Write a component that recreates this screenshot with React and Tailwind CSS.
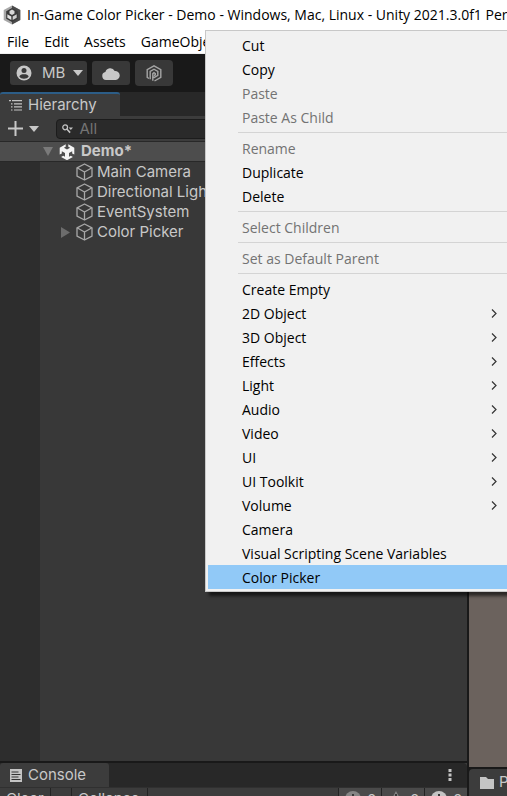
import React from "react";

const menuGroups = [
  [{ label: "Cut" }, { label: "Copy" }, { label: "Paste", off: true }, { label: "Paste As Child", off: true }],
  [{ label: "Rename", off: true }, { label: "Duplicate" }, { label: "Delete" }],
  [{ label: "Select Children", off: true }],
  [{ label: "Set as Default Parent", off: true }],
  [
    { label: "Create Empty" },
    { label: "2D Object", sub: true },
    { label: "3D Object", sub: true },
    { label: "Effects", sub: true },
    { label: "Light", sub: true },
    { label: "Audio", sub: true },
    { label: "Video", sub: true },
    { label: "UI", sub: true },
    { label: "UI Toolkit", sub: true },
    { label: "Volume", sub: true },
    { label: "Camera" },
    { label: "Visual Scripting Scene Variables" },
    { label: "Color Picker", active: true },
  ],
];

const objects = [
  { name: "Main Camera" },
  { name: "Directional Light" },
  { name: "EventSystem" },
  { name: "Color Picker", expandable: true },
];

function AppIcon() {
  return (
    <svg className="h-5 w-[18px] shrink-0" viewBox="0 0 18 20" aria-hidden="true">
      <path d="M9 .5 17.300 5v10L9 19.500.7 15V5z" fill="#a8a8a8" />
      <path d="M9 .5 17.300 5v10L9 19.500V16l5-3V7L9 4z" fill="#4a4a4a" />
      <path d="M9 3 14.800 6.300v7.400L9 17l-5.800-3.300V6.300z" fill="#3a3a3a" />
      <path d="M9 4.500 11.500 6v2.600L9 10 6.500 8.600V6z" fill="#d8d8d8" />
      <path d="M4.300 9.200 8.300 11.500V15L4.300 12.800z" fill="#e0e0e0" />
      <path d="M13.700 9.200 9.700 11.500V15l4-2.200z" fill="#cfcfcf" />
    </svg>
  );
}

function Caret({ className }) {
  return (
    <svg className={className} viewBox="0 0 10 6" preserveAspectRatio="none" aria-hidden="true">
      <path d="M0 0h10L5 6z" fill="currentColor" />
    </svg>
  );
}

function UserIcon() {
  return (
    <svg className="size-4" viewBox="0 0 16 16" aria-hidden="true">
      <circle cx="8" cy="8" r="7.500" fill="#c8c8c8" />
      <circle cx="8" cy="5.400" r="2.500" fill="#383838" />
      <path d="M3.300 11.600C3.800 9.900 5.700 9.300 8 9.300s4.200.6 4.700 2.300C11.700 13 10 13.800 8 13.800s-3.700-.8-4.700-2.200z" fill="#383838" />
    </svg>
  );
}

function CloudIcon() {
  return (
    <svg className="h-[13px] w-[18px]" viewBox="0 0 18 13" aria-hidden="true">
      <path d="M4 13a4 4 0 0 1-.6-7.900A5 5 0 0 1 12.700 4 4.500 4.500 0 0 1 13.700 13z" fill="#c8c8c8" />
    </svg>
  );
}

function PlasticIcon() {
  return (
    <svg className="h-[17px] w-4" viewBox="0 0 16 17" fill="none" stroke="#a5a5a5" strokeWidth="1.400" aria-hidden="true">
      <path d="M3 13.500 1.200 12.400V4.600L8 .9l6.800 3.700v7.800L8.500 16" />
      <path d="M4.200 14.200V6.400L8 4.200l3.800 2.200v4L8 12.600l-1.200-.7" />
      <path d="M6.800 15.800V8.600L8 7.600l1.300.9v1.400L8 10.600" />
    </svg>
  );
}

function TreeIcon() {
  return (
    <svg className="h-[11px] w-[13px]" viewBox="0 0 13 11" fill="#c4c4c4" aria-hidden="true">
      <path d="M0 0h2v1.200H0zM3 0h10v1.200H3zM2 3.200h1.500v1.200H2zM5 3.200h8v1.200H5zM2 6.300h1.500v1.200H2zM5 6.300h8v1.200H5zM2 9.400h1.500v1.200H2zM5 9.400h8v1.200H5z" />
    </svg>
  );
}

function SearchIcon() {
  return (
    <svg className="h-[10px] w-3" viewBox="0 0 12 10" fill="none" stroke="#c4c4c4" aria-hidden="true">
      <circle cx="3.300" cy="3.300" r="2.500" strokeWidth="1.300" />
      <path d="m5 5 3.500 3.800" strokeWidth="1.600" />
      <path d="M7 3.500h4.500L9.200 6z" fill="#c4c4c4" stroke="none" />
    </svg>
  );
}

function UnityIcon() {
  return (
    <svg className="size-4" viewBox="0 0 16 16" aria-hidden="true">
      <path d="M6.700.3v2.400L4.900 3.800 8 5.600l3.100-1.800-1.800-1.100V.3L15.300 3.800v6.800l-2.100-1.200V7.200L10 9v3.700l1.800-1 2.100 1.200L8 16.200l-5.900-3.300 2.100-1.200 1.800 1V9L2.800 7.200v2.200L.7 10.600V3.800z" fill="#f4f4f4" />
    </svg>
  );
}

function CubeIcon() {
  return (
    <svg className="h-[18px] w-[17px] shrink-0" viewBox="0 0 17 18" fill="none" stroke="#a8a8a8" strokeWidth="1.300" strokeLinejoin="round" aria-hidden="true">
      <path d="M8.500 1 16 4.800v8.400L8.500 17 1 13.200V4.800z" />
      <path d="M1 4.800 8.500 9 16 4.800M8.500 9v8" />
    </svg>
  );
}

function ContextMenu() {
  return (
    <div
      role="menu"
      className="absolute top-[30px] right-0 left-[205px] border border-r-0 border-[#c8c8c8] bg-[#f1f1f1] py-[2px] pl-[2px] text-[14px] text-black shadow-[4px_4px_3px_rgba(0,0,0,0.6)]"
    >
      {menuGroups.map((group, i) => (
        <div key={i}>
          {i > 0 && <hr className="my-[3px] ml-[30px] border-[#d4d4d4]" />}
          {group.map((item) => (
            <button
              key={item.label}
              role="menuitem"
              disabled={item.off}
              className={`flex h-6 w-full items-center justify-between pr-[10px] pl-[34px] text-left leading-6 whitespace-nowrap ${
                item.active ? "bg-[#91c9f7]" : ""
              } ${item.off ? "text-[#737373]" : ""}`}
            >
              <span className="pt-[2px]">{item.label}</span>
              {item.sub && (
                <svg className="h-[9px] w-[6px]" viewBox="0 0 6 9" fill="none" stroke="#333" strokeWidth="1.200" aria-hidden="true">
                  <path d="m1 .5 4 4-4 4" />
                </svg>
              )}
            </button>
          ))}
        </div>
      ))}
    </div>
  );
}

function Hierarchy() {
  return (
    <section className="flex min-h-0 flex-1 flex-col bg-[#383838]">
      <div className="flex h-6 shrink-0 bg-[#282828]">
        <h2 className="flex w-[120px] items-center gap-[6px] rounded-t-[3px] border-t-2 border-[#2c5d87] bg-[#3c3c3c] pl-[9px] text-[15px]">
          <TreeIcon />
          Hierarchy
        </h2>
      </div>
      <div className="flex h-[25px] shrink-0 items-center bg-[#3c3c3c]">
        <button aria-label="Add" className="flex h-6 w-[56px] items-center gap-[6px] pl-2">
          <svg className="size-[15px]" viewBox="0 0 15 15" stroke="#c8c8c8" strokeWidth="2" aria-hidden="true">
            <path d="M7.500 0v15M0 7.500h15" />
          </svg>
          <Caret className="h-[6px] w-[10px]" />
        </button>
        <label className="flex h-5 flex-1 items-center gap-[6px] rounded-l-[4px] border border-[#1c1c1c] bg-[#2a2a2a] pl-[5px]">
          <SearchIcon />
          <input aria-label="Search hierarchy" placeholder="All" className="w-full min-w-0 bg-transparent text-[15px] leading-4 outline-none placeholder:text-[#747474]" />
        </label>
      </div>
      <div className="flex h-[21px] shrink-0 items-center border-y border-[#282828] bg-[#4d4d4d] pl-[43px] text-[15px] font-bold">
        <Caret className="mr-[6px] h-[9px] w-[10px] text-[#7a7a7a]" />
        <UnityIcon />
        <span className="pl-[6px]">Demo*</span>
      </div>
      <div className="flex min-h-0 flex-1">
        <div className="w-10 bg-[#2d2d2d]" />
        <ul className="flex-1">
          {objects.map((o) => (
            <li key={o.name} className="flex h-5 items-center text-[15px] leading-5">
              <span className="flex w-9 shrink-0 pl-[21px]">
                {o.expandable && (
                  <svg className="h-[11px] w-[9px]" viewBox="0 0 9 11" aria-hidden="true">
                    <path d="M0 0v11l9-5.500z" fill="#6c6c6c" />
                  </svg>
                )}
              </span>
              <CubeIcon />
              <span className="pl-1">{o.name}</span>
            </li>
          ))}
        </ul>
      </div>
    </section>
  );
}

function Badge({ kind }) {
  return (
    <button aria-label={kind} className="flex w-[43px] items-start gap-[6px] border-l border-[#232323] bg-[#4a4a4a] pt-[3px] pl-[6px]">
      <svg className="size-4 shrink-0" viewBox="0 0 16 16" aria-hidden="true">
        {kind === "Warnings" ? (
          <path d="M8 0 16 15H0z" fill="#858585" />
        ) : (
          <circle cx="8" cy="8" r="8" fill={kind === "Errors" ? "#c4c4c4" : "#858585"} />
        )}
        <path d="M7 3h2v6H7z" fill="#383838" />
      </svg>
      <span className="pt-px text-[15px] leading-4">0</span>
    </button>
  );
}

function Console() {
  return (
    <section className="mt-[2px] h-[33px] shrink-0 overflow-hidden bg-[#3c3c3c]">
      <div className="flex h-6 items-stretch justify-between rounded-tr-[4px] bg-[#282828] pr-[15px]">
        <h2 className="flex w-[109px] items-center gap-[6px] rounded-t-[3px] bg-[#3c3c3c] pt-px pl-[10px] text-[15px]">
          <svg className="h-[13px] w-3" viewBox="0 0 12 13" aria-hidden="true">
            <path d="M0 0h12v13H0z" fill="#c4c4c4" />
            <path d="M1.500 3h7M1.500 5.500h9M1.500 8h7M1.500 10.500h9" stroke="#333" strokeWidth="1.200" />
          </svg>
          Console
        </h2>
        <button aria-label="Console options" className="flex w-[4px] items-center">
          <svg className="h-3 w-[4px]" viewBox="0 0 4 12" fill="#c4c4c4" aria-hidden="true">
            <path d="M.5 0h3v3h-3zM.5 4.500h3v3h-3zM.5 9h3v3h-3z" />
          </svg>
        </button>
      </div>
      <div className="flex h-6 items-stretch border-t border-[#303030] text-[15px] leading-[22px]">
        <button className="flex w-[51px] items-start border-r border-[#232323] pl-[6px]">Clear</button>
        <button aria-label="Clear options" className="w-[21px] border-r border-[#232323]" />
        <button className="flex w-[76px] items-start border-r border-[#232323] pl-[6px]">Collapse</button>
        <div className="flex-1" />
        <Badge kind="Messages" />
        <Badge kind="Warnings" />
        <Badge kind="Errors" />
      </div>
    </section>
  );
}

export default function App() {
  return (
    <div className="relative flex h-screen flex-col overflow-hidden bg-[#191919] font-['Open_Sans','Noto_Sans',sans-serif]">
      <header className="shrink-0 bg-white text-[14px] text-black">
        <div className="flex h-[29px] items-center gap-[6px] pl-[3px] whitespace-nowrap">
          <AppIcon />
          <h1>In-Game Color Picker - Demo - Windows, Mac, Linux - Unity 2021.3.0f1 Personal</h1>
        </div>
        <nav className="flex h-[25px] items-center gap-[15px] border-b border-[#f0f0f0] pl-[7px]">
          <button>File</button>
          <button>Edit</button>
          <button>Assets</button>
          <button>GameObject</button>
        </nav>
      </header>
      <div className="flex min-h-0 flex-1 flex-col font-['Inter','Roboto',sans-serif] text-[#c8c8c8]">
        <div className="flex h-[38px] shrink-0 items-center gap-[5px] pl-[10px]">
          <button className="flex h-6 w-[77px] items-center rounded-[3px] bg-[#383838] pl-[6px] text-[15px]">
            <UserIcon />
            <span className="flex-1 pl-[10px] text-left">MB</span>
            <Caret className="mr-[4px] h-[6px] w-[10px]" />
          </button>
          <button aria-label="Cloud services" className="flex h-6 w-[38px] items-center justify-center rounded-[3px] bg-[#383838]">
            <CloudIcon />
          </button>
          <button aria-label="Version control" className="flex h-[26px] w-[38px] items-center justify-center rounded-[4px] bg-[#383838]">
            <PlasticIcon />
          </button>
        </div>
        <main className="flex min-h-0 flex-1 gap-[2px]">
          <div className="flex min-w-0 flex-1 flex-col">
            <Hierarchy />
            <Console />
          </div>
          <div className="flex w-[38px] flex-col gap-[2px]">
            <div className="flex-1 bg-[#6b625d]" />
            <h2 className="flex h-[27px] items-center gap-[5px] overflow-hidden rounded-tl-[4px] bg-[#3c3c3c] pl-[11px] text-[15px]">
              <svg className="h-3 w-[14px] shrink-0" viewBox="0 0 14 12" aria-hidden="true">
                <path d="M0 0h6l2 2h6v10H0z" fill="#c4c4c4" />
              </svg>
              Project
            </h2>
          </div>
        </main>
      </div>
      <ContextMenu />
    </div>
  );
}
